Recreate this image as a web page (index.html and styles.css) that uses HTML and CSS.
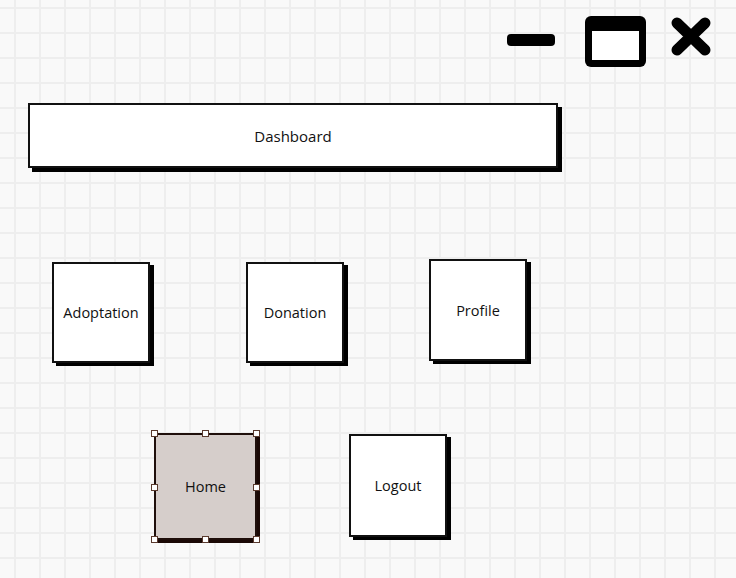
FILE: index.html
```html
<!DOCTYPE html>
<html lang="en">
<head>
    <meta charset="UTF-8">
    <meta name="viewport" content="width=device-width, initial-scale=1.0">
    <title>Dashboard</title>
    <link rel="stylesheet" href="styles.css">
</head>
<body>
    <div class="controls">
        <svg class="ctl-min" width="48" height="12" viewBox="0 0 48 12">
            <rect x="0" y="0" width="48" height="12" rx="4" fill="#000"/>
        </svg>
        <svg class="ctl-max" width="61" height="51" viewBox="0 0 61 51">
            <rect x="0" y="0" width="61" height="51" rx="6" fill="#000"/>
            <rect x="7" y="15" width="47" height="29" fill="#fff"/>
        </svg>
        <svg class="ctl-close" width="42" height="39" viewBox="0 0 42 39">
            <path d="M7 6 L35 33 M35 6 L7 33" stroke="#000" stroke-width="11" stroke-linecap="round"/>
        </svg>
    </div>

    <div class="title-bar">Dashboard</div>

    <div class="tiles row-one">
        <a class="tile adoptation" href="#">Adoptation</a>
        <a class="tile donation" href="#">Donation</a>
        <a class="tile profile" href="#">Profile</a>
    </div>

    <div class="tiles row-two">
        <a class="tile home selected" href="#">
            Home
            <span class="handle tl"></span>
            <span class="handle tc"></span>
            <span class="handle tr"></span>
            <span class="handle ml"></span>
            <span class="handle mr"></span>
            <span class="handle bl"></span>
            <span class="handle bc"></span>
            <span class="handle br"></span>
        </a>
        <a class="tile logout" href="#">Logout</a>
    </div>
</body>
</html>
```

FILE: styles.css
```css
body {
    margin: 0;
    padding: 0;
    width: 736px;
    height: 578px;
    overflow: hidden;
    font-family: "Open Sans", Arial, sans-serif;
    background-color: #f9f9f9;
    background-image:
        linear-gradient(to right, #eeeeee 2px, transparent 2px),
        linear-gradient(to bottom, #eeeeee 2px, transparent 2px);
    background-size: 25px 25px;
    background-position: 14px 7px;
}

.controls {
    display: flex;
    justify-content: flex-end;
    align-items: center;
    padding: 16px 24px 0 0;
    height: 51px;
}

.ctl-min {
    margin-top: -4px;
}

.ctl-max {
    margin-left: 30px;
}

.ctl-close {
    margin-left: 24px;
    margin-top: -10px;
}

.title-bar {
    margin: 36px 0 0 28px;
    width: 526px;
    height: 61px;
    border: 2px solid #111;
    background-color: #fff;
    box-shadow: 4px 4px 0 #000;
    display: flex;
    align-items: center;
    justify-content: center;
    font-size: 15px;
    color: #111;
}

.tiles {
    display: flex;
    align-items: flex-start;
}

.tile {
    position: relative;
    display: flex;
    align-items: center;
    justify-content: center;
    box-sizing: border-box;
    width: 98px;
    height: 101px;
    border: 2px solid #111;
    background-color: #fff;
    box-shadow: 4px 3px 0 #000;
    font-size: 14.5px;
    color: #111;
    text-decoration: none;
}

.row-one {
    margin: 91px 0 0 52px;
}

.adoptation,
.donation {
    margin-top: 3px;
}

.donation {
    margin-left: 96px;
}

.profile {
    margin-left: 85px;
    height: 102px;
}

.row-two {
    margin: 70px 0 0 154px;
}

.home {
    width: 103px;
    height: 107px;
    background-color: #d6cecb;
    border-color: #1f0f0b;
    box-shadow: 3px 3px 0 #1a0805;
}

.logout {
    margin: 1px 0 0 92px;
    height: 103px;
}

.handle {
    position: absolute;
    width: 5px;
    height: 5px;
    background-color: #fff;
    border: 1px solid #5a3a2e;
}

.handle.tl { left: -5px; top: -5px; }
.handle.tc { left: 46px; top: -5px; }
.handle.tr { right: -5px; top: -5px; }
.handle.ml { left: -5px; top: 49px; }
.handle.mr { right: -5px; top: 49px; }
.handle.bl { left: -5px; bottom: -5px; }
.handle.bc { left: 46px; bottom: -5px; }
.handle.br { right: -5px; bottom: -5px; }
```
